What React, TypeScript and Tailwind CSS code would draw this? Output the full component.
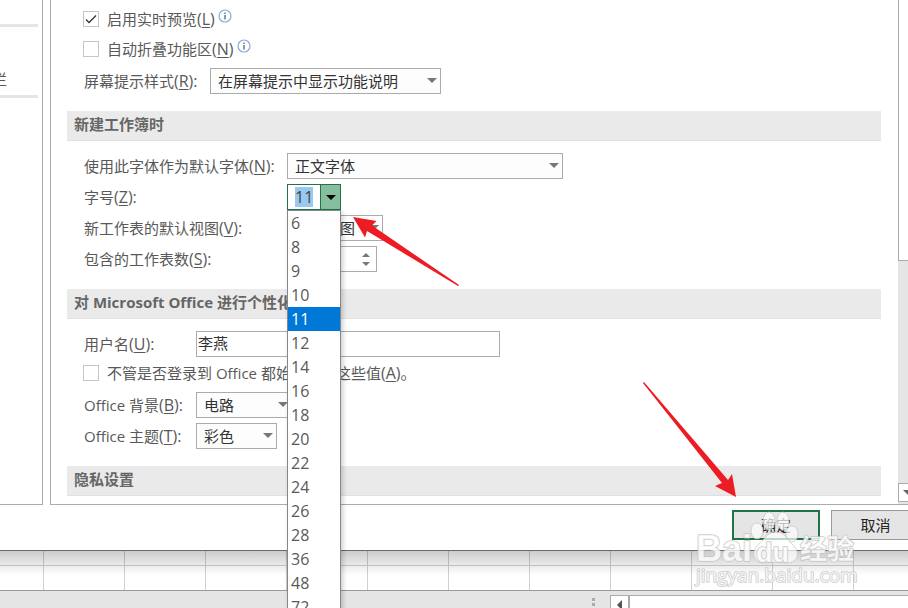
import React from 'react'

const fontSizes = [6, 8, 9, 10, 11, 12, 14, 16, 18, 20, 22, 24, 26, 28, 36, 48, 72]
const columns = Array.from({ length: 11 })

const Caret: React.FC<{ className?: string }> = ({ className = 'text-[#777777]' }) => (
  <svg width="10" height="5" viewBox="0 0 10 5" className={className} aria-hidden="true">
    <path d="M0 0H10L5 5Z" fill="currentColor" />
  </svg>
)

const InfoIcon: React.FC = () => (
  <svg width="14" height="14" viewBox="0 0 14 14" className="ml-[3px] mb-[6px]" aria-hidden="true">
    <circle cx="7" cy="7" r="6" fill="none" stroke="#8ba9d6" strokeWidth="1.2" />
    <path d="M7 6V10.5M7 3.5V4.9" stroke="#44546a" strokeWidth="1.2" />
  </svg>
)

type LabelProps = { htmlFor: string; text: string; hotkey: string; end?: string; className?: string }

const Label: React.FC<LabelProps> = ({ htmlFor, text, hotkey, end = '):', className = '' }) => (
  <label htmlFor={htmlFor} className={`shrink-0 whitespace-nowrap ${className}`}>
    {text}
    <span className="text-[16px]">
      (<span className="underline underline-offset-2">{hotkey}</span>
      {end}
    </span>
  </label>
)

const Select: React.FC<{ id: string; value: string; className: string }> = ({ id, value, className }) => (
  <div className={`relative h-[26px] shrink-0 ${className}`}>
    <select
      id={id}
      className="block w-full h-full appearance-none border border-[#ababab] bg-[#fdfdfd] pl-[7px] text-[#333333] outline-none"
    >
      <option>{value}</option>
    </select>
    <span className="pointer-events-none absolute right-1 top-[10px]">
      <Caret />
    </span>
  </div>
)

const Check: React.FC<{ id: string; checked?: boolean }> = ({ id, checked }) => (
  <span className="relative mr-2 -ml-px size-4 shrink-0">
    <input
      id={id}
      type="checkbox"
      defaultChecked={checked}
      className="peer block size-4 appearance-none border border-[#c6c6c6] bg-white"
    />
    <svg
      viewBox="0 0 16 16"
      className="pointer-events-none absolute inset-0 hidden size-4 peer-checked:block"
      aria-hidden="true"
    >
      <path d="M3 8.5L6 11.5L13 4.5" fill="none" stroke="#333" strokeWidth="1.3" />
    </svg>
  </span>
)

const SectionTitle: React.FC<{ children: React.ReactNode }> = ({ children }) => (
  <h2 className="mr-[17px] h-[30px] border-b border-[#e1e1e1] bg-[#eaeaea] pl-[7px] leading-[27px] font-bold text-[#666666]">
    {children}
  </h2>
)

const FontSizeBox: React.FC = () => (
  <div className="relative ml-[150px] h-[26px] w-[54px] shrink-0">
    <div className="flex h-full border border-[#217346] bg-white">
      <input
        id="font-size"
        defaultValue="11"
        className="my-[2px] ml-[7px] w-[18px] bg-[#99c9ef] text-center text-[16px] text-[#444444] outline-none"
      />
      <button
        aria-label="字号"
        className="ml-auto flex w-[20px] items-center justify-center border-l border-[#217346] bg-[#86bfa0]"
      >
        <Caret className="text-black" />
      </button>
    </div>
    <ul
      role="listbox"
      className="absolute left-0 top-[26px] z-20 w-full border border-[#828790] bg-white text-[16px] shadow-[2px_2px_5px_rgba(0,0,0,0.2)]"
    >
      {fontSizes.map((size) => (
        <li
          key={size}
          role="option"
          aria-selected={size === 11}
          className="h-6 pl-[3px] leading-6 text-[#595959] aria-selected:bg-[#0078d7] aria-selected:text-white"
        >
          {size}
        </li>
      ))}
    </ul>
  </div>
)

const Sidebar: React.FC = () => (
  <nav className="h-[505px] w-[43px] shrink-0 border-r border-b border-[#ababab] pt-6 pr-1">
    <hr className="h-[3px] border-0 bg-[#e5e5e5]" />
    <a href="#toolbar" className="flex h-[68px] w-[7px] items-end justify-end pb-[5px] whitespace-nowrap">
      栏
    </a>
    <hr className="h-[3px] border-0 bg-[#e5e5e5]" />
  </nav>
)

const Options: React.FC = () => (
  <main className="ml-[7px] flex h-[505px] min-w-0 flex-1 border-b border-l border-[#ababab]">
    <div className="min-w-0 flex-1 pl-4">
      <section className="flex flex-col gap-[5px] pt-2 pb-[17px] pl-[17px]">
        <div className="mb-[3px] flex h-[22px] items-center">
          <Check id="preview" checked />
          <Label htmlFor="preview" text="启用实时预览" hotkey="L" end=")" />
          <InfoIcon />
        </div>
        <div className="mb-[3px] flex h-[22px] items-center">
          <Check id="collapse" />
          <Label htmlFor="collapse" text="自动折叠功能区" hotkey="N" end=")" />
          <InfoIcon />
        </div>
        <div className="flex items-center">
          <Label htmlFor="tip" text="屏幕提示样式" hotkey="R" className="w-[126px]" />
          <Select id="tip" value="在屏幕提示中显示功能说明" className="w-[231px]" />
        </div>
      </section>

      <SectionTitle>新建工作簿时</SectionTitle>
      <section className="flex flex-col gap-[5px] pt-3 pb-[17px] pl-[17px]">
        <div className="flex items-center">
          <Label htmlFor="font" text="使用此字体作为默认字体" hotkey="N" className="w-[203px]" />
          <Select id="font" value="正文字体" className="w-[276px]" />
        </div>
        <div className="flex items-center">
          <Label htmlFor="font-size" text="字号" hotkey="Z" className="w-[53px]" />
          <FontSizeBox />
        </div>
        <div className="flex items-center">
          <Label htmlFor="view" text="新工作表的默认视图" hotkey="V" className="w-[203px]" />
          <Select id="view" value="普通视图" className="w-[96px]" />
        </div>
        <div className="flex items-center">
          <Label htmlFor="sheets" text="包含的工作表数" hotkey="S" className="w-[203px]" />
          <div className="flex h-[26px] w-[90px] items-center border border-[#ababab] pr-[6px]">
            <input id="sheets" defaultValue="1" className="min-w-0 flex-1 pl-[7px] outline-none" />
            <div className="flex flex-col gap-[5px]">
              <button aria-label="增加" className="rotate-180">
                <Caret className="block h-1 w-2 text-[#777777]" />
              </button>
              <button aria-label="减少">
                <Caret className="block h-1 w-2 text-[#777777]" />
              </button>
            </div>
          </div>
        </div>
      </section>

      <SectionTitle>对 Microsoft Office 进行个性化设置</SectionTitle>
      <section className="flex flex-col gap-[5px] pt-3 pb-[17px] pl-[17px]">
        <div className="flex items-center">
          <Label htmlFor="user" text="用户名" hotkey="U" className="w-[112px]" />
          <input
            id="user"
            defaultValue="李燕"
            className="h-[26px] w-[304px] border border-[#ababab] bg-white pb-[3px] pl-px text-[#333333] outline-none"
          />
        </div>
        <div className="mb-[3px] flex h-[22px] items-center">
          <Check id="always" />
          <Label htmlFor="always" text="不管是否登录到 Office 都始终使用这些值" hotkey="A" end=")。" />
        </div>
        <div className="flex items-center">
          <Label htmlFor="background" text="Office 背景" hotkey="B" className="w-[112px]" />
          <Select id="background" value="电路" className="w-[96px]" />
        </div>
        <div className="flex items-center">
          <Label htmlFor="theme" text="Office 主题" hotkey="T" className="w-[112px]" />
          <Select id="theme" value="彩色" className="w-[81px]" />
        </div>
      </section>

      <SectionTitle>隐私设置</SectionTitle>
    </div>

    {/* scroll bar */}
    <div className="flex w-[10px] shrink-0 flex-col overflow-hidden bg-[#e5e5e5]">
      <div className="h-[261px] border-b border-l border-[#ababab] bg-white" />
      <button
        aria-label="向下滚动"
        className="mt-auto mb-[2px] flex h-[19px] w-[18px] items-center border border-[#ababab] bg-white pl-1"
      >
        <Caret className="shrink-0 text-[#666666]" />
      </button>
    </div>
  </main>
)

const Sheet: React.FC = () => (
  <div className="flex-1 bg-[#e5e5e5]">
    <div className="relative overflow-hidden border-b border-[#999999] bg-white">
      {[0, 1].map((row) => (
        <div key={row} className={row === 0 ? 'flex h-[15px] border-b border-[#d0d0d0]' : 'flex h-6'}>
          {columns.map((_, i) => (
            <div
              key={i}
              className="w-[81px] shrink-0 border-r border-[#d0d0d0] first:w-[44px]"
            />
          ))}
        </div>
      ))}
      <div className="absolute inset-x-0 top-0 h-6 bg-linear-to-b from-black/20 to-transparent" />
    </div>
    <div className="flex h-[18px] pt-1">
      <div className="flex-1" />
      <svg width="20" height="14" viewBox="0 0 20 14" className="shrink-0" aria-hidden="true">
        <path d="M2 3h3v3h-3zM2 8h3v3h-3z" fill="#ababab" />
      </svg>
      <div className="flex w-[298px] shrink-0 border-t border-l border-[#ababab] bg-white">
        <button aria-label="向左滚动" className="flex w-[19px] justify-center border-r-2 border-[#ababab] pt-1">
          <svg width="5" height="10" viewBox="0 0 5 10" aria-hidden="true">
            <path d="M5 0V10L0 5Z" fill="#555" />
          </svg>
        </button>
      </div>
    </div>
  </div>
)

const Arrows: React.FC = () => (
  <>
    <svg width="108" height="72" viewBox="0 0 108 72" className="absolute left-[352px] top-[215px] z-30" aria-hidden="true">
      <path d="M1 2L24.500 6L20 10.500L107 70L106 71L15 16L13 22.500Z" fill="#ed1c24" />
    </svg>
    <svg width="94" height="116" viewBox="0 0 94 116" className="absolute left-[643px] top-[382px] z-30" aria-hidden="true">
      <path d="M1 0L85 98L89 92L93 115L72 104L79 101L0 1Z" fill="#ed1c24" />
    </svg>
  </>
)

const Watermark: React.FC = () => (
  <svg
    width="170"
    height="80"
    viewBox="0 0 170 80"
    className="pointer-events-none absolute left-[692px] top-[508px] z-30"
    aria-hidden="true"
  >
    <g fill="#ffffff" fillOpacity="0.7" stroke="#bdbdbd" strokeOpacity="0.6" strokeWidth="1">
      <ellipse cx="65" cy="23" rx="6" ry="8" />
      <ellipse cx="77" cy="13" rx="6" ry="9" />
      <ellipse cx="91" cy="13" rx="6" ry="9" />
      <ellipse cx="100" cy="26" rx="6" ry="8" />
      <path d="M84 24C75 24 73 31 67 36C58 43 61 56 74 55C81 54 86 54 92 55C106 56 109 45 101 37C95 32 93 24 84 24Z" />
    </g>
    <g
      fill="#ffffff"
      fillOpacity="0.8"
      stroke="#c0c0c0"
      strokeOpacity="0.8"
      strokeWidth="1.6"
      strokeLinejoin="round"
      paintOrder="stroke"
    >
      <text x="4" y="53" fontSize="36" fontWeight="700" fontFamily="Liberation Sans">
        Bai
        <tspan x="64" y="54" fontSize="27">du</tspan>
        <tspan x="108" y="51" fontSize="27" fontFamily="Noto Sans CJK SC">经验</tspan>
      </text>
      <text x="4" y="74" fontSize="19" fontFamily="Open Sans">jingyan.baidu.com</text>
    </g>
  </svg>
)

const App: React.FC = () => (
  <div className="relative flex h-screen flex-col overflow-hidden font-['Open_Sans','Noto_Sans_CJK_SC',sans-serif] text-[15px] leading-[22px] text-[#595959]">
    <div className="border-b border-[#6e6a6e] bg-white">
      <div className="flex">
        <Sidebar />
        <Options />
      </div>
      <footer className="-mr-3 flex justify-end gap-[11px] pt-[5px] pb-[10px] text-[#262626]">
        <button className="h-[30px] w-[88px] border-2 border-[#217346] bg-[#e5e5e5]">确定</button>
        <button className="h-[30px] w-[89px] border border-[#999999] bg-[#e5e5e5]">取消</button>
      </footer>
    </div>
    <Sheet />
    <Arrows />
    <Watermark />
  </div>
)

export default App
